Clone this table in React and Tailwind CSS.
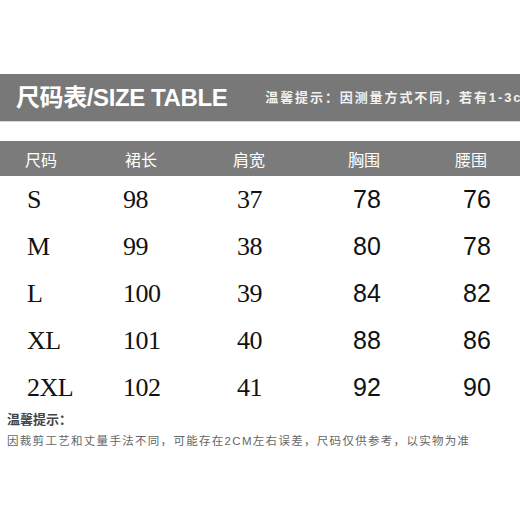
const rows = [
  ["S", "98", "37", "78", "76"],
  ["M", "99", "38", "80", "78"],
  ["L", "100", "39", "84", "82"],
  ["XL", "101", "40", "88", "86"],
  ["2XL", "102", "41", "92", "90"],
];

const serif = "font-['Liberation_Serif','Noto_Sans_CJK_SC',serif]";
const sans = "font-['Liberation_Sans','Noto_Sans_CJK_SC',sans-serif]";

export default function App() {
  return (
    <div className="w-[520px] h-[520px] bg-white overflow-hidden flex flex-col">
      {/* TITLE BAR */}
      <div className="mt-[74px] h-[48px] bg-[#787878] flex items-center pl-[16px] overflow-hidden whitespace-nowrap border-b border-[#d8d8d8]">
        <span className={`${sans} text-[24px] font-bold text-white tracking-[-0.4px]`}>
          尺码表/SIZE TABLE
        </span>
        <span className={`${sans} ml-[38px] text-[13px] font-bold text-[#f2f2f2] tracking-[1.9px]`}>
          温馨提示：因测量方式不同，若有1-3cm误差属正常范围
        </span>
      </div>

      {/* TABLE HEADER */}
      <div className="mt-[19px] h-[35px] bg-[#7b7b7b] grid grid-cols-[100px_108px_115px_107px_1fr] items-center pl-[25px] text-white text-[16px] font-['Noto_Sans_CJK_SC',sans-serif]">
        <span>尺码</span>
        <span>裙长</span>
        <span>肩宽</span>
        <span>胸围</span>
        <span>腰围</span>
      </div>

      {/* ROWS */}
      <div className="pl-[27px] flex flex-col">
        {rows.map((row) => (
          <div
            key={row[0]}
            className="h-[47px] grid grid-cols-[96px_114px_116px_110px_1fr] items-center text-[#111]"
          >
            <span className={`${serif} text-[26px] tracking-[-0.5px]`}>{row[0]}</span>
            <span className={`${serif} text-[26px] tracking-[-0.5px]`}>{row[1]}</span>
            <span className={`${serif} text-[26px] tracking-[-0.5px]`}>{row[2]}</span>
            <span className={`${sans} text-[25px]`}>{row[3]}</span>
            <span className={`${sans} text-[25px]`}>{row[4]}</span>
          </div>
        ))}
      </div>

      {/* NOTE */}
      <div className="pl-[7px]">
        <div className={`${sans} text-[13px] font-bold text-[#444] leading-[18px]`}>温馨提示：</div>
        <div className={`${sans} mt-[4px] text-[11.5px] text-[#666] tracking-[1.3px] leading-[16px] whitespace-nowrap`}>
          因裁剪工艺和丈量手法不同，可能存在2CM左右误差，尺码仅供参考，以实物为准
        </div>
      </div>
    </div>
  );
}
